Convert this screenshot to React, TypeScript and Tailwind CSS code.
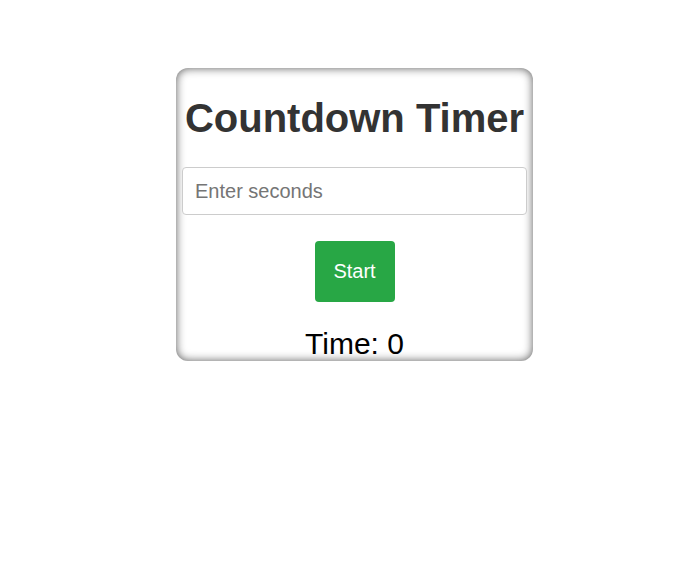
import React, { useEffect, useState } from "react";

export default function App() {
  const [value, setValue] = useState("");
  const [time, setTime] = useState(0);
  const [running, setRunning] = useState(false);

  useEffect(() => {
    if (!running) return;
    if (time <= 0) {
      setRunning(false);
      return;
    }
    const id = setTimeout(() => setTime((t) => t - 1), 1000);
    return () => clearTimeout(id);
  }, [running, time]);

  const start = () => {
    const n = parseInt(value, 10);
    if (!isNaN(n) && n > 0) {
      setTime(n);
      setRunning(true);
    }
  };

  return (
    <div className="min-h-[572px] bg-white pt-[68px] font-['Liberation_Sans',Arial,sans-serif]">
      <div className="ml-[176px] w-[357px] rounded-[12px] bg-white px-[6px] text-center shadow-[inset_0_0_10px_rgba(0,0,0,0.65)]">
        <h1 className="pt-[27px] pb-[26px] text-[40px] font-bold leading-[46px] text-[#333]">
          Countdown Timer
        </h1>
        <input
          type="number"
          value={value}
          onChange={(e) => setValue(e.target.value)}
          placeholder="Enter seconds"
          className="block h-[48px] w-full rounded-[4px] border border-[#ccc] bg-white px-[12px] text-[20px] text-black outline-none placeholder:text-[#757575]"
        />
        <button
          onClick={start}
          className="mx-auto mt-[26px] block h-[61px] w-[80px] rounded-[4px] bg-[#28a745] text-[20px] leading-[23px] text-white"
        >
          Start
        </button>
        <div className="mt-[24px] text-[30px] leading-[35px] text-black">
          Time: {time}
        </div>
      </div>
    </div>
  );
}
